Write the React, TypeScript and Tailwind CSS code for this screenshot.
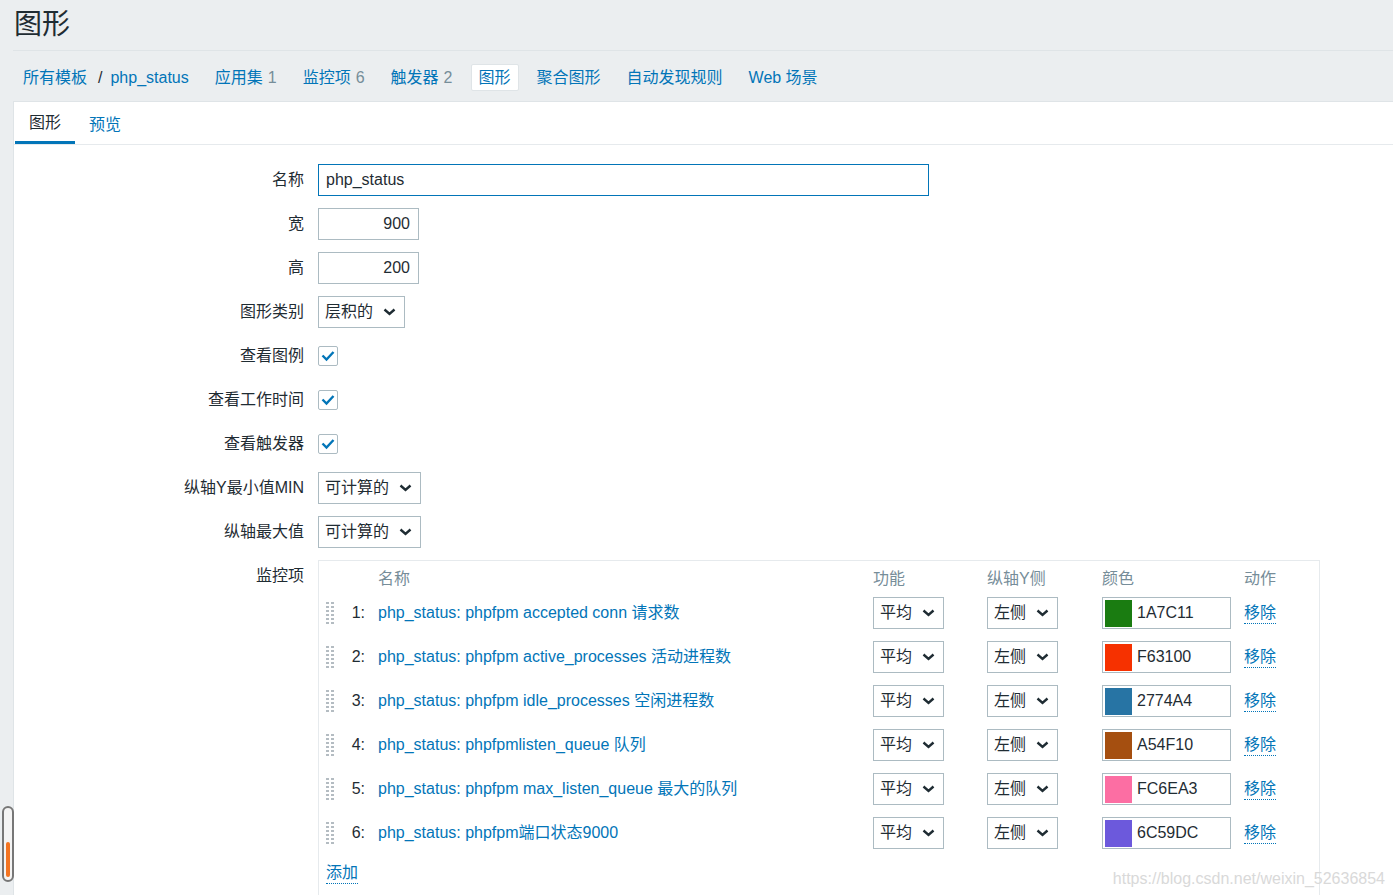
import React from 'react';

const FONT = '"Liberation Sans", "Noto Sans CJK SC", sans-serif';

const crumbs = [
  { label: '应用集', count: '1' },
  { label: '监控项', count: '6' },
  { label: '触发器', count: '2' },
  { label: '图形', active: true },
  { label: '聚合图形' },
  { label: '自动发现规则' },
  { label: 'Web 场景' },
];

const items = [
  { name: 'php_status: phpfpm accepted conn 请求数', color: '1A7C11' },
  { name: 'php_status: phpfpm active_processes 活动进程数', color: 'F63100' },
  { name: 'php_status: phpfpm idle_processes 空闲进程数', color: '2774A4' },
  { name: 'php_status: phpfpmlisten_queue 队列', color: 'A54F10' },
  { name: 'php_status: phpfpm max_listen_queue 最大的队列', color: 'FC6EA3' },
  { name: 'php_status: phpfpm端口状态9000', color: '6C59DC' },
];

const Chevron = () => (
  <svg width="13" height="8" viewBox="0 0 13 8" className="shrink-0">
    <polyline points="1.5,1.5 6.5,6 11.5,1.5" fill="none" stroke="#1f2c33" strokeWidth="2.4" />
  </svg>
);

const Select = ({ value, width }: { value: string; width: string }) => (
  <div className={`${width} h-8 border border-[#acbbc2] bg-white flex items-center justify-between pl-[6px] pr-[8px] text-[#1f2c33]`}>
    <span>{value}</span>
    <Chevron />
  </div>
);

const Checkbox = () => (
  <div className="w-5 h-5 border border-[#acbbc2] rounded-[2px] bg-white flex items-center justify-center">
    <svg width="14" height="12" viewBox="0 0 14 12">
      <polyline points="1.5,5.5 5.5,9.5 12.5,2" fill="none" stroke="#0275b8" strokeWidth="2.4" />
    </svg>
  </div>
);

// drag grip: 2 x 6 dots
const Handle = () => (
  <div className="grid grid-cols-2 gap-x-[2px] gap-y-[1.5px] w-[8px]">
    {Array.from({ length: 12 }).map((_, i) => (
      <span key={i} className="block w-[3px] h-[2.5px] bg-[#b4bcc2]" />
    ))}
  </div>
);

const FormRow = ({ label, children, top }: { label: string; children: React.ReactNode; top?: boolean }) => (
  <>
    <div className={`text-right text-[#1f2c33] leading-8 ${top ? 'self-start' : ''}`}>{label}</div>
    <div className="flex items-center">{children}</div>
  </>
);

export default function App() {
  return (
    <div className="relative h-[895px] overflow-hidden bg-[#ebeef0] pl-[13px] text-[16px]" style={{ fontFamily: FONT }}>
      <div className="h-[51px] border-b border-[#dfe4e7] flex items-center pl-[1px]">
        <h1 className="text-[28px] leading-none text-[#1f2c33]">图形</h1>
      </div>

      <nav className="h-[50px] flex items-center pl-[2px] pt-[3px] gap-[10px]">
        <div className="flex items-center px-2 text-[#0275b8]">
          <span>所有模板</span>
          <span className="ml-[11px] mr-[8px] text-[#1f2c33]">/</span>
          <span>php_status</span>
        </div>
        {crumbs.map((c) => (
          <div
            key={c.label}
            className={`px-2 h-[27px] flex items-center text-[#0275b8] ${c.active ? 'bg-white border border-[#dfe4e7] rounded-[2px] px-[7px]' : ''}`}
          >
            {c.label}
            {c.count && <span className="ml-[5px] text-[#768d99]">{c.count}</span>}
          </div>
        ))}
      </nav>

      <div className="bg-white border-t border-l border-[#dfe4e7] h-full">
        <div className="flex border-b border-[#e6eaed] pl-[1px]">
          <div className="h-[42px] px-[14px] flex items-center border-b-[3px] border-[#0275b8] text-[#1f2c33] pt-[3px]">图形</div>
          <div className="h-[42px] px-[14px] flex items-center text-[#0275b8] pt-[3px]">预览</div>
        </div>

        <div className="grid grid-cols-[290px_1fr] gap-x-[14px] gap-y-[12px] pt-[19px] items-center">
          <FormRow label="名称">
            <div className="w-[611px] h-8 border border-[#0275b8] flex items-center pl-[7px] text-[#1f2c33]">php_status</div>
          </FormRow>
          <FormRow label="宽">
            <div className="w-[101px] h-8 border border-[#acbbc2] flex items-center justify-end pr-[8px] text-[#1f2c33]">900</div>
          </FormRow>
          <FormRow label="高">
            <div className="w-[101px] h-8 border border-[#acbbc2] flex items-center justify-end pr-[8px] text-[#1f2c33]">200</div>
          </FormRow>
          <FormRow label="图形类别">
            <Select value="层积的" width="w-[87px]" />
          </FormRow>
          <FormRow label="查看图例">
            <Checkbox />
          </FormRow>
          <FormRow label="查看工作时间">
            <Checkbox />
          </FormRow>
          <FormRow label="查看触发器">
            <Checkbox />
          </FormRow>
          <FormRow label="纵轴Y最小值MIN">
            <Select value="可计算的" width="w-[103px]" />
          </FormRow>
          <FormRow label="纵轴最大值">
            <Select value="可计算的" width="w-[103px]" />
          </FormRow>
          <FormRow label="监控项" top>
            <div className="w-[1002px] border border-[#e6eaed] pt-[6px] pl-[7px] pb-[40px] self-start">
              <div className="grid grid-cols-[16px_36px_495px_114px_115px_142px_1fr] items-center">
                <div className="h-[22px]" />
                <div />
                <div className="text-[#768d99]">名称</div>
                <div className="text-[#768d99]">功能</div>
                <div className="text-[#768d99]">纵轴Y侧</div>
                <div className="text-[#768d99]">颜色</div>
                <div className="text-[#768d99]">动作</div>
                {items.map((it, i) => (
                  <React.Fragment key={it.color}>
                    <div className="h-[44px] flex items-center">
                      <Handle />
                    </div>
                    <div className="text-right pr-[13px] text-[#1f2c33]">{i + 1}:</div>
                    <div className="text-[#0275b8] whitespace-nowrap">{it.name}</div>
                    <div>
                      <Select value="平均" width="w-[71px]" />
                    </div>
                    <div>
                      <Select value="左侧" width="w-[71px]" />
                    </div>
                    <div>
                      <div className="w-[129px] h-8 border border-[#acbbc2] flex items-center p-[2px]">
                        <span className="block w-[27px] h-[27px]" style={{ backgroundColor: `#${it.color}` }} />
                        <span className="ml-[5px] text-[#1f2c33]">{it.color}</span>
                      </div>
                    </div>
                    <div>
                      <span className="text-[#0275b8] border-b border-dotted border-[#0275b8] leading-[20px] inline-block">移除</span>
                    </div>
                  </React.Fragment>
                ))}
              </div>
              <div className="mt-[6px]">
                <span className="text-[#0275b8] border-b border-dotted border-[#0275b8] leading-[20px] inline-block">添加</span>
              </div>
            </div>
          </FormRow>
        </div>
      </div>

      <div className="absolute left-[2px] top-[806px] w-[12px] h-[76px] rounded-[6px] border-2 border-[#777] bg-[#f4f4f4] flex justify-center items-end pb-[3px]">
        <div className="w-[4px] h-[35px] rounded-[2px] bg-[#f47421]" />
      </div>

      <div className="absolute right-[8px] top-[867px] text-[#d9d9d9] text-[16px]">https://blog.csdn.net/weixin_52636854</div>
    </div>
  );
}
